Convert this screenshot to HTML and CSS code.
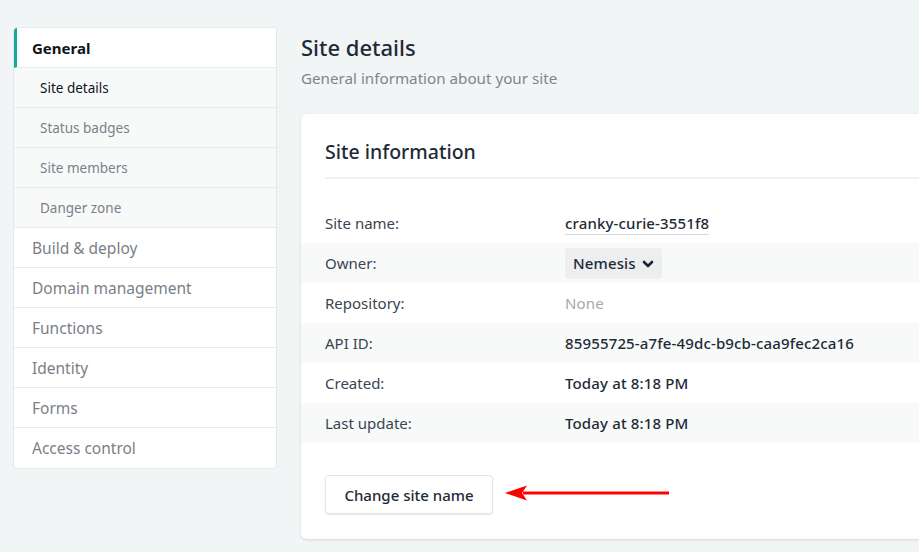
FILE: index.html
```html
<!DOCTYPE html>
<html>
<head>
<meta charset="utf-8">
<link rel="stylesheet" href="styles.css">
</head>
<body>
<div class="page">
  <nav class="sidenav">
    <div class="nav-item active">General</div>
    <div class="nav-sub current">Site details</div>
    <div class="nav-sub">Status badges</div>
    <div class="nav-sub">Site members</div>
    <div class="nav-sub">Danger zone</div>
    <div class="nav-item">Build &amp; deploy</div>
    <div class="nav-item">Domain management</div>
    <div class="nav-item">Functions</div>
    <div class="nav-item">Identity</div>
    <div class="nav-item">Forms</div>
    <div class="nav-item last">Access control</div>
  </nav>
  <main class="main">
    <h1 class="title">Site details</h1>
    <p class="subtitle">General information about your site</p>
    <section class="card">
      <h2 class="card-title">Site information</h2>
      <div class="rows">
        <div class="row"><span class="label">Site name:</span><span class="value"><span class="editable">cranky-curie-3551f8</span></span></div>
        <div class="row alt"><span class="label">Owner:</span><span class="value"><span class="owner">Nemesis <svg class="chev" viewBox="0 0 12 12" width="12" height="12"><path d="M2 4l4 4 4-4" fill="none" stroke="#1a2634" stroke-width="2.6" stroke-linecap="round" stroke-linejoin="round"/></svg></span></span></div>
        <div class="row"><span class="label">Repository:</span><span class="value none">None</span></div>
        <div class="row alt"><span class="label">API ID:</span><span class="value">85955725-a7fe-49dc-b9cb-caa9fec2ca16</span></div>
        <div class="row"><span class="label">Created:</span><span class="value">Today at 8:18 PM</span></div>
        <div class="row alt"><span class="label">Last update:</span><span class="value">Today at 8:18 PM</span></div>
      </div>
      <div class="actions">
        <button class="btn">Change site name</button>
        <svg class="arrow" width="170" height="20" viewBox="0 0 170 20"><path d="M20 8.5H166v3H20z" fill="#f00"/><path d="M2 10L24 2.5 19 10 24 17.5z" fill="#f00"/></svg>
      </div>
    </section>
  </main>
</div>
</body>
</html>
```
FILE: styles.css
```css
* { box-sizing: border-box; }
html, body { margin: 0; padding: 0; }
body {
  background: #f2f5f6;
  font-family: "Noto Sans", "Open Sans", sans-serif;
  color: #1e2a36;
  width: 919px;
  height: 552px;
  overflow: hidden;
}
.page {
  display: flex;
  align-items: flex-start;
  padding: 27px 0 0 13px;
  gap: 24px;
}
.sidenav {
  width: 264px;
  flex: none;
  background: #fff;
  border: 1px solid #e6e9eb;
  border-radius: 4px;
  overflow: hidden;
}
.nav-item, .nav-sub {
  height: 40px;
  display: flex;
  align-items: center;
  border-bottom: 1px solid #e8ebec;
  color: #7a8088;
}
.nav-item {
  padding-left: 18px;
  font-size: 15.5px;
}
.nav-item.last { border-bottom: none; }
.nav-item.active {
  color: #0d1620;
  font-weight: 700;
  font-size: 15px;
  border-left: 3px solid #15a99a;
  padding-left: 15px;
  background: #fff;
}
.nav-sub {
  background: #f8fafa;
  padding-left: 26px;
  font-size: 13.5px;
}
.nav-sub.current { color: #0d1620; }
.main {
  flex: 1;
  min-width: 0;
}
.title {
  margin: 5px 0 0;
  font-size: 22px;
  font-weight: 500;
  line-height: 30px;
  color: #1e2a36;
}
.subtitle {
  margin: 5px 0 0;
  font-size: 15.2px;
  line-height: 22px;
  color: #7e858d;
}
.card {
  margin-top: 25px;
  background: #fff;
  border-radius: 6px 0 0 6px;
  box-shadow: 0 1px 3px rgba(0,0,0,0.12);
  padding: 25px 0 25px 0;
}
.card-title {
  margin: 0 0 0 24px;
  font-size: 19.5px;
  font-weight: 500;
  line-height: 26px;
  padding-bottom: 12px;
  border-bottom: 2px solid #f0f2f3;
}
.rows { margin-top: 24px; }
.row {
  height: 40px;
  display: flex;
  align-items: center;
  padding-left: 24px;
  font-size: 15px;
}
.row.alt { background: #f8fafa; }
.label {
  width: 240px;
  color: #3a4550;
}
.value {
  font-weight: 500;
  color: #1e2a36;
  letter-spacing: 0.15px;
}
.value.none { color: #a4a8ad; font-weight: 400; }
.editable {
  border-bottom: 1px solid #d6d9dc;
  font-weight: 500;
  padding-bottom: 1px;
}
.owner {
  display: inline-flex;
  align-items: center;
  gap: 6px;
  background: #eceeef;
  border-radius: 4px;
  padding: 0 8px;
  height: 31px;
}
.chev { margin-top: 2px; }
.actions {
  display: flex;
  align-items: center;
  margin-top: 32px;
  padding-left: 24px;
  gap: 10px;
}
.btn {
  font-family: inherit;
  font-size: 15px;
  font-weight: 500;
  color: #1e2a36;
  background: #fff;
  border: 1px solid #e3e6e8;
  border-radius: 4px;
  box-shadow: 0 1px 2px rgba(0,0,0,0.1);
  height: 39px;
  width: 168px;
  padding: 0;
}
.arrow { display: block; margin-top: -4px; }
```
